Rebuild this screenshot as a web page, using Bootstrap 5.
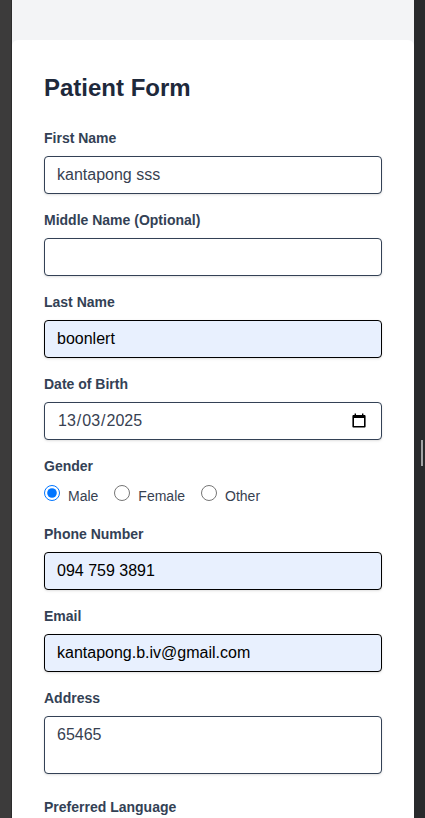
<!DOCTYPE html>
<html lang="en">
<head>
<meta charset="utf-8">
<meta name="viewport" content="width=device-width, initial-scale=1">
<title>Patient Form</title>
<link href="https://cdn.jsdelivr.net/npm/bootstrap@5.3.0/dist/css/bootstrap.min.css" rel="stylesheet">
<style>
  body { font-family: "Liberation Sans", Arial, sans-serif; color: #374151; background: #3c3c3c; }
  .device { height: 818px; }
  .edge-left { width: 12px; background: #3c3b3b; border-right: 1px solid #2c2c2c; }
  .edge-right { width: 11px; background: #292a2c; padding: 88px 2px 0 0; }
  .grip { width: 2px; height: 26px; background: #a2a3a4; }
  .screen { background: #f3f4f6; padding-top: 40px; }
  .sheet { background: #fff; border-radius: 6px; padding: 32px; height: 900px; }
  .form-title { font-size: 24px; line-height: 32px; color: #1e293b; }
  .field-label { display: block; font-size: 14px; line-height: 20px; font-weight: 700; color: #334155; }
  .field, .field:focus {
    height: 38px; padding: 6px 12px; line-height: 24px; font-size: 16px; color: #374151;
    background-color: #fff; border: 1px solid #334155; border-radius: 4px;
    box-shadow: 0 1px 3px rgba(0,0,0,.1), 0 1px 2px -1px rgba(0,0,0,.1);
  }
  .field.autofilled { background-color: #e8f0fe; border-color: #000; color: #000; }
  textarea.field { height: 58px; min-height: 0; resize: none; }
  .address-group { margin-bottom: 23px; }
  .part { padding: 0 1px; }
  .choices { height: 24px; font-size: 14px; line-height: 24px; }
  .choices input { width: 16px; height: 16px; margin: 1px 8px 0 0; }
  .choices label { display: flex; align-items: flex-start; margin-right: 16px; }
</style>
</head>
<body>
<div class="device d-flex overflow-hidden">
  <div class="edge-left flex-shrink-0"></div>
  <main class="screen flex-grow-1">
    <form class="sheet" autocomplete="off">
      <h1 class="form-title fw-bold mb-4">Patient Form</h1>
      <div class="mb-3">
        <label class="field-label mb-2" for="first">First Name</label>
        <input class="form-control field" id="first" type="text" value="kantapong sss">
      </div>
      <div class="mb-3">
        <label class="field-label mb-2" for="middle">Middle Name (Optional)</label>
        <input class="form-control field" id="middle" type="text">
      </div>
      <div class="mb-3">
        <label class="field-label mb-2" for="last">Last Name</label>
        <input class="form-control field autofilled" id="last" type="text" value="boonlert">
      </div>
      <div class="mb-3">
        <span class="field-label mb-2">Date of Birth</span>
        <div class="form-control field d-flex align-items-center justify-content-between">
          <div class="d-flex"><span class="part">13</span><span>/</span><span class="part">03</span><span>/</span><span class="part">2025</span></div>
          <svg width="20" height="16" viewBox="0 0 20 16" aria-hidden="true">
            <path fill="#000" fill-rule="evenodd" d="M4.6 2h1V.6H7V2h6V.6h1.4V2h1c.7 0 1.2.5 1.2 1.2v10.2c0 .7-.5 1.2-1.2 1.2H4.6c-.7 0-1.2-.5-1.2-1.2V3.200c0-.7.5-1.200 1.200-1.200zM5 5v8h10V5z"/>
          </svg>
        </div>
      </div>
      <div class="mb-3">
        <span class="field-label mb-2">Gender</span>
        <div class="choices d-flex">
          <label><input type="radio" name="gender" checked>Male</label>
          <label><input type="radio" name="gender">Female</label>
          <label><input type="radio" name="gender">Other</label>
        </div>
      </div>
      <div class="mb-3">
        <label class="field-label mb-2" for="phone">Phone Number</label>
        <input class="form-control field autofilled" id="phone" type="tel" value="094 759 3891">
      </div>
      <div class="mb-3">
        <label class="field-label mb-2" for="email">Email</label>
        <input class="form-control field autofilled" id="email" type="email" value="kantapong.b.iv@gmail.com">
      </div>
      <div class="address-group">
        <label class="field-label mb-2" for="address">Address</label>
        <textarea class="form-control field" id="address">65465</textarea>
      </div>
      <div class="mb-3">
        <span class="field-label mb-2">Preferred Language</span>
      </div>
    </form>
  </main>
  <div class="edge-right flex-shrink-0 d-flex align-items-center justify-content-end"><div class="grip"></div></div>
</div>
<script src="https://cdn.jsdelivr.net/npm/bootstrap@5.3.0/dist/js/bootstrap.bundle.min.js"></script>
</body>
</html>
